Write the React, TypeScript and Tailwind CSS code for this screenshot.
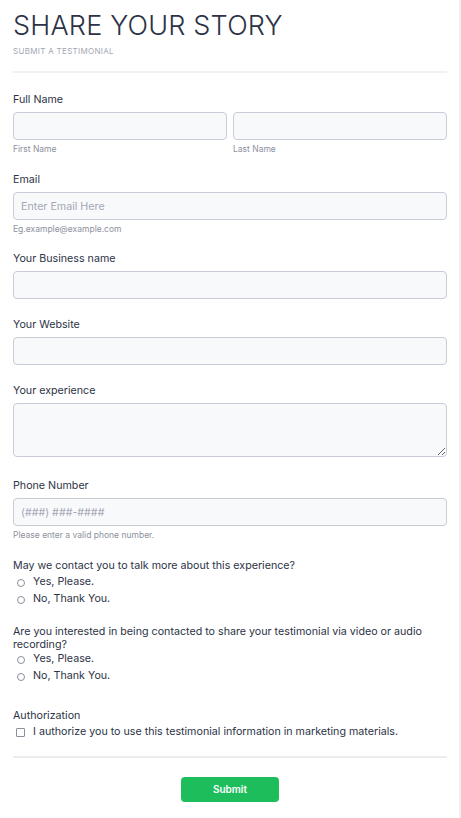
import React from 'react';

const font = "font-['Inter','Liberation_Sans',sans-serif]";
const inputCls =
  'block w-full h-[28px] rounded-[4px] border border-[#c9ccd6] bg-[#f8f9fb] bg-[radial-gradient(#eceef3_0.6px,transparent_0.6px)] bg-[size:4px_4px] px-[7px] text-[10.7px] text-[#2c3345] placeholder:text-[#a4a8b5] outline-none';

const Label = ({ children }: { children: React.ReactNode }) => (
  <label className="block text-[10.7px] leading-[14px] text-[#2c3345] mb-[5px]">{children}</label>
);

const Sub = ({ children }: { children: React.ReactNode }) => (
  <p className="mt-[4px] text-[8.5px] leading-[11px] text-[#8d919e]">{children}</p>
);

const Radio = ({ name, label }: { name: string; label: string }) => (
  <label className="flex items-center h-[17px] text-[10.7px] text-[#2c3345]">
    <span className="ml-[4px] mr-[8px] w-[8px] h-[8px] rounded-full border border-[#8a8f9c] bg-white" />
    <input type="radio" name={name} className="hidden" />
    {label}
  </label>
);

export default function App() {
  return (
    <div className={`min-h-[818px] bg-white border-r-2 border-[#f1f1f3] ${font}`}>
      <div className="pl-[13px] pr-[13px] pt-[11px] w-[460px]">
        <h1 className="text-[27px] leading-[30px] font-light tracking-[0.2px] text-[#2c3345]">SHARE YOUR STORY</h1>
        <p className="mt-[5px] text-[8px] leading-[10px] tracking-[0.3px] text-[#a3a7b3]">SUBMIT A TESTIMONIAL</p>
        <div className="mt-[15px] h-[2px] bg-[#f1f1f3]" />

        <div className="mt-[20px]">
          <Label>Full Name</Label>
          <div className="flex gap-[6px]">
            <div className="flex-1">
              <input className={inputCls} />
              <Sub>First Name</Sub>
            </div>
            <div className="flex-1">
              <input className={inputCls} />
              <Sub>Last Name</Sub>
            </div>
          </div>
        </div>

        <div className="mt-[18px]">
          <Label>Email</Label>
          <input className={inputCls} placeholder="Enter Email Here" />
          <Sub>Eg.example@example.com</Sub>
        </div>

        <div className="mt-[17px]">
          <Label>Your Business name</Label>
          <input className={inputCls} />
        </div>

        <div className="mt-[19px]">
          <Label>Your Website</Label>
          <input className={inputCls} />
        </div>

        <div className="mt-[19px]">
          <Label>Your experience</Label>
          <textarea className={`${inputCls} h-[54px] resize-y`} />
        </div>

        <div className="mt-[22px]">
          <Label>Phone Number</Label>
          <input className={inputCls} placeholder="(###) ###-####" />
          <Sub>Please enter a valid phone number.</Sub>
        </div>

        <div className="mt-[18px]">
          <p className="text-[10.7px] leading-[14px] text-[#2c3345] mb-[1px]">May we contact you to talk more about this experience?</p>
          <Radio name="contact" label="Yes, Please." />
          <Radio name="contact" label="No, Thank You." />
        </div>

        <div className="mt-[17px]">
          <p className="text-[10.7px] leading-[13px] text-[#2c3345]">
            Are you interested in being contacted to share your testimonial via video or audio recording?
          </p>
          <Radio name="video" label="Yes, Please." />
          <Radio name="video" label="No, Thank You." />
        </div>

        <div className="mt-[24px]">
          <p className="text-[10.7px] leading-[14px] text-[#2c3345] mb-[1px]">Authorization</p>
          <label className="flex items-center h-[17px] text-[10.7px] text-[#2c3345]">
            <span className="ml-[3px] mr-[8px] w-[9px] h-[9px] rounded-[1px] border border-[#8a8f9c] bg-white" />
            I authorize you to use this testimonial information in marketing materials.
          </label>
        </div>

        <div className="mt-[15px] h-[2px] bg-[#ececee]" />

        <div className="flex justify-center pt-[19px]">
          <button className="w-[98px] h-[25px] rounded-[4px] bg-[#1ebd5c] text-white text-[10px] font-semibold">
            Submit
          </button>
        </div>
      </div>
    </div>
  );
}
